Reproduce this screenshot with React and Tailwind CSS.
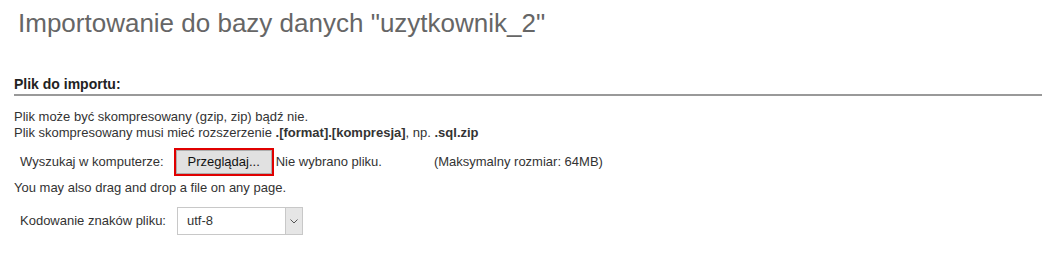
import React from "react";

function FileRow() {
  return (
    <div className="flex items-center pl-[6px] mt-[6px] h-[30px]">
      <span className="mr-[10px]">Wyszukaj w komputerze:</span>
      <span className="border-2 border-[#e00000] flex">
        <button className="bg-[#e1e1e1] border border-[#adadad] h-[24px] w-[96px] text-[13px] text-[#111]">
          Przeglądaj...
        </button>
      </span>
      <span className="ml-[2px]">Nie wybrano pliku.</span>
      <span className="ml-[52px]">(Maksymalny rozmiar: 64MB)</span>
    </div>
  );
}

function CharsetRow() {
  return (
    <div className="flex items-center pl-[6px] mt-[11px]">
      <span className="mr-[11px]">Kodowanie znaków pliku:</span>
      <div className="flex w-[126px] h-[28px] border border-[#c8c8c8] bg-white">
        <span className="flex-1 pl-[9px] flex items-center">utf-8</span>
        <span className="w-[17px] bg-[#e6e6e6] border-l border-[#c8c8c8] flex items-center justify-center">
          <svg width="8" height="5" viewBox="0 0 8 5">
            <path d="M0.5 0.5 L4 4 L7.5 0.5" fill="none" stroke="#555" strokeWidth="1" />
          </svg>
        </span>
      </div>
    </div>
  );
}

export default function App() {
  return (
    <div className="w-[1042px] h-[264px] bg-white text-[13px] leading-[16px] text-[#333] overflow-hidden" style={{ fontFamily: '"Liberation Sans", Arial, sans-serif' }}>
      <h2 className="text-[26px] text-[#666] pl-[18px] pt-[6px] leading-[34px]">
        Importowanie do bazy danych "uzytkownik_2"
      </h2>
      <div className="pl-[14px] mt-[36px]">
        <div className="font-bold text-[14px] text-[#222] pb-[2px] border-b-2 border-[#999]">Plik do importu:</div>
        <div className="mt-[13px]">
          <div>Plik może być skompresowany (gzip, zip) bądź nie.</div>
          <div>
            Plik skompresowany musi mieć rozszerzenie <b>.[format].[kompresja]</b>, np. <b>.sql.zip</b>
          </div>
        </div>
        <FileRow />
        <div className="mt-[3px]">You may also drag and drop a file on any page.</div>
        <CharsetRow />
      </div>
    </div>
  );
}
